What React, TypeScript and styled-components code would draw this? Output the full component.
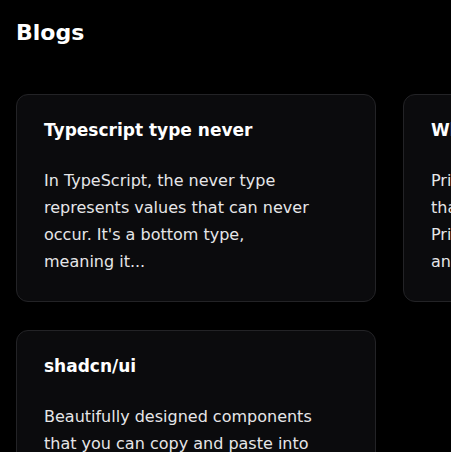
import styled, { createGlobalStyle } from 'styled-components';

const GlobalStyle = createGlobalStyle`
  html, body {
    margin: 0;
    padding: 0;
    background: #000000;
    font-family: "DejaVu Sans", sans-serif;
    overflow: hidden;
  }
`;

const blogs = [
  {
    title: 'Typescript type never',
    summary:
      "In TypeScript, the never type represents values that can never occur. It's a bottom type, meaning\u00a0it...",
  },
  {
    title: 'What is Prisma?',
    summary:
      'Prisma is a next-generation ORM that\u00a0simplifies database access. Prisma\u00a0Client is a type-safe API and\u00a0auto-generated...',
  },
  {
    title: 'shadcn/ui',
    summary:
      'Beautifully designed components that you can copy and paste into your apps. Accessible. Customizable...',
  },
];

const App = () => {
  return (
    <>
      <GlobalStyle />
      <Page>
        <Title>Blogs</Title>
        <Grid>
          {blogs.map((blog) => (
            <Card key={blog.title}>
              <CardTitle>{blog.title}</CardTitle>
              <CardText>{blog.summary}</CardText>
            </Card>
          ))}
        </Grid>
      </Page>
    </>
  );
};

const Page = styled.main`
  padding: 19px 16px 16px;
  width: max-content;
`;

const Title = styled.h1`
  margin: 0 0 47px;
  font-size: 22px;
  line-height: 28px;
  font-weight: 700;
  color: #ffffff;
`;

const Grid = styled.div`
  display: grid;
  grid-template-columns: repeat(2, 360px);
  column-gap: 27px;
  row-gap: 28px;
`;

const Card = styled.article`
  box-sizing: border-box;
  padding: 23px 27px 26px;
  background: #0b0b0d;
  border: 1px solid #232326;
  border-radius: 12px;
`;

const CardTitle = styled.h2`
  margin: 0 0 25px;
  font-size: 17px;
  line-height: 24px;
  font-weight: 700;
  color: #ffffff;
`;

const CardText = styled.p`
  margin: 0;
  font-size: 16px;
  line-height: 27px;
  color: #e6e6e8;
`;

export default App;
